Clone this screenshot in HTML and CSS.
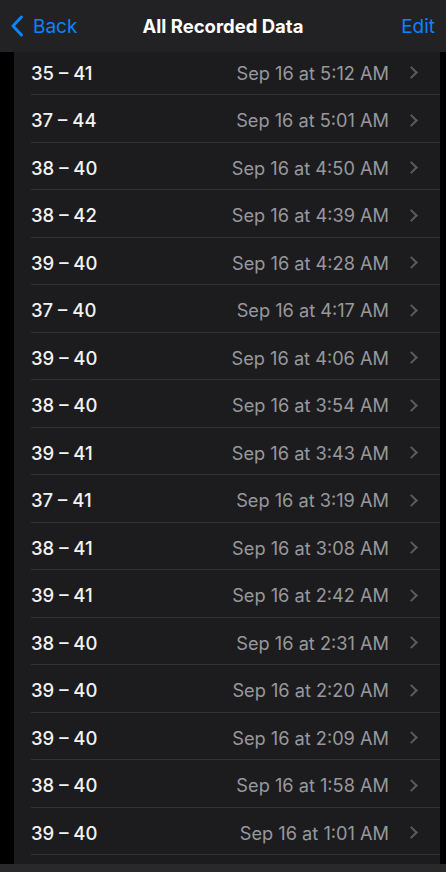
FILE: index.html
```html
<!DOCTYPE html>
<html lang="en">
<head>
    <meta charset="UTF-8">
    <meta name="viewport" content="width=device-width, initial-scale=1.0">
    <title>All Recorded Data</title>
    <link rel="stylesheet" href="styles.css">
</head>
<body>
    <div id="screen">
        <div class="navbar">
            <a class="nav-back">
                <svg width="14" height="22" viewBox="0 0 14 22"><path d="M11.5 2 L3 11 L11.5 20" fill="none" stroke="#0a84ff" stroke-width="3" stroke-linecap="round" stroke-linejoin="round"/></svg>
                <span>Back</span>
            </a>
            <div class="nav-title">All Recorded Data</div>
            <a class="nav-edit">Edit</a>
        </div>

        <div class="list">
            <div class="row"><span class="value">35 – 41</span><span class="date">Sep 16 at 5:12 AM</span><span class="chevron"></span></div>
            <div class="row"><span class="value">37 – 44</span><span class="date">Sep 16 at 5:01 AM</span><span class="chevron"></span></div>
            <div class="row"><span class="value">38 – 40</span><span class="date">Sep 16 at 4:50 AM</span><span class="chevron"></span></div>
            <div class="row"><span class="value">38 – 42</span><span class="date">Sep 16 at 4:39 AM</span><span class="chevron"></span></div>
            <div class="row"><span class="value">39 – 40</span><span class="date">Sep 16 at 4:28 AM</span><span class="chevron"></span></div>
            <div class="row"><span class="value">37 – 40</span><span class="date">Sep 16 at 4:17 AM</span><span class="chevron"></span></div>
            <div class="row"><span class="value">39 – 40</span><span class="date">Sep 16 at 4:06 AM</span><span class="chevron"></span></div>
            <div class="row"><span class="value">38 – 40</span><span class="date">Sep 16 at 3:54 AM</span><span class="chevron"></span></div>
            <div class="row"><span class="value">39 – 41</span><span class="date">Sep 16 at 3:43 AM</span><span class="chevron"></span></div>
            <div class="row"><span class="value">37 – 41</span><span class="date">Sep 16 at 3:19 AM</span><span class="chevron"></span></div>
            <div class="row"><span class="value">38 – 41</span><span class="date">Sep 16 at 3:08 AM</span><span class="chevron"></span></div>
            <div class="row"><span class="value">39 – 41</span><span class="date">Sep 16 at 2:42 AM</span><span class="chevron"></span></div>
            <div class="row"><span class="value">38 – 40</span><span class="date">Sep 16 at 2:31 AM</span><span class="chevron"></span></div>
            <div class="row"><span class="value">39 – 40</span><span class="date">Sep 16 at 2:20 AM</span><span class="chevron"></span></div>
            <div class="row"><span class="value">39 – 40</span><span class="date">Sep 16 at 2:09 AM</span><span class="chevron"></span></div>
            <div class="row"><span class="value">38 – 40</span><span class="date">Sep 16 at 1:58 AM</span><span class="chevron"></span></div>
            <div class="row"><span class="value">39 – 40</span><span class="date">Sep 16 at 1:01 AM</span><span class="chevron"></span></div>
        </div>

        <div class="toolbar"></div>
    </div>
</body>
</html>
```

FILE: styles.css
```css
body {
    margin: 0;
    background-color: #000;
    font-family: Inter, "Liberation Sans", sans-serif;
    color: #fff;
}

#screen {
    position: relative;
    width: 446px;
    height: 872px;
    overflow: hidden;
    background-color: #000;
}

.navbar {
    position: relative;
    z-index: 2;
    height: 52px;
    display: flex;
    align-items: center;
    justify-content: space-between;
    padding: 0 11px 0 10px;
    background-color: #222224;
}

.nav-back {
    display: flex;
    align-items: center;
    gap: 9px;
    color: #0a84ff;
    font-size: 19px;
}

.nav-title {
    position: absolute;
    left: 0;
    right: 0;
    text-align: center;
    font-size: 18.5px;
    font-weight: 700;
    pointer-events: none;
}

.nav-edit {
    color: #0a84ff;
    font-size: 19px;
}

.list {
    margin: -4.5px 6px 0 14px;
    background-color: #1c1c1e;
    height: 830px;
}

.row {
    height: 47.5px;
    display: flex;
    align-items: center;
    margin-left: 17px;
    padding-top: 4px;
    padding-right: 22px;
    border-bottom: 1px solid #333336;
    box-sizing: border-box;
}

.value {
    font-size: 18.5px;
    font-weight: 500;
    color: #f2f2f2;
}

.date {
    margin-left: auto;
    font-size: 18.2px;
    color: #98989d;
}

.chevron {
    width: 7px;
    height: 7px;
    margin-left: 18px;
    margin-right: 2px;
    border-top: 2px solid #5c5c60;
    border-right: 2px solid #5c5c60;
    transform: rotate(45deg);
}

.toolbar {
    position: absolute;
    left: 0;
    right: 0;
    bottom: 0;
    height: 8px;
    background-color: #29292b;
}
```
